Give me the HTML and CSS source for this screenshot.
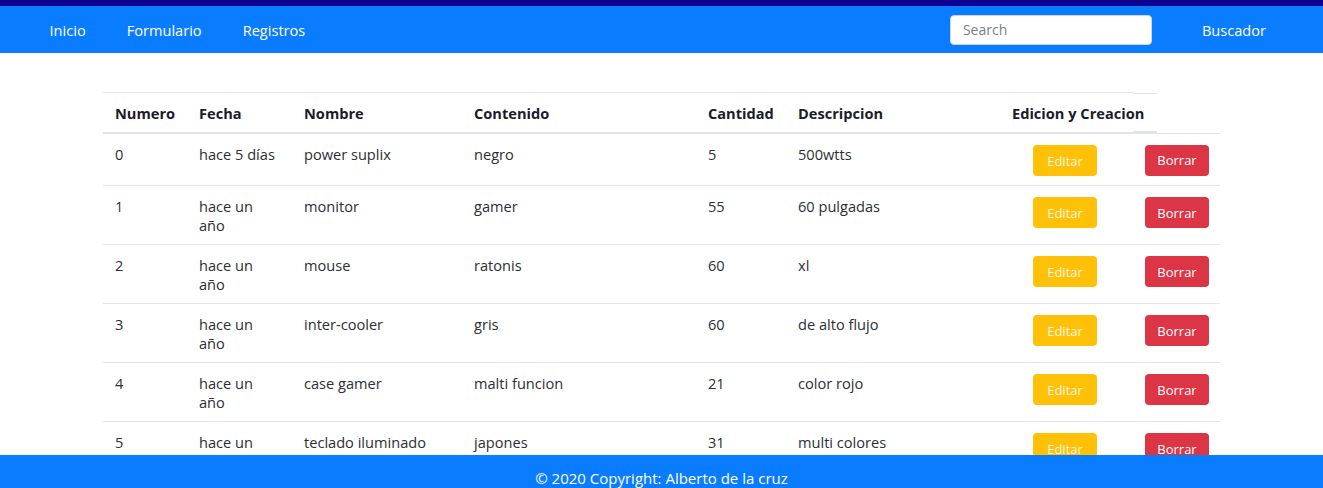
FILE: index.html
```html
<!DOCTYPE html>
<html lang="es">
<head>
<meta charset="utf-8">
<title>Registros</title>
<link rel="stylesheet" href="styles.css">
</head>
<body>
<div class="topstrip"></div>
<nav class="navbar">
  <ul class="nav-links">
    <li><a href="#">Inicio</a></li>
    <li><a href="#">Formulario</a></li>
    <li><a href="#">Registros</a></li>
  </ul>
  <form class="search-form">
    <input class="search-input" type="text" placeholder="Search">
    <button class="search-btn" type="button">Buscador</button>
  </form>
</nav>
<main class="content">
  <table class="table">
    <colgroup>
      <col class="c1"><col class="c2"><col class="c3"><col class="c4"><col class="c5"><col class="c6"><col class="c7"><col class="c8">
    </colgroup>
    <thead>
      <tr>
        <th>Numero</th><th>Fecha</th><th>Nombre</th><th>Contenido</th><th>Cantidad</th><th>Descripcion</th><th class="th-edit">Edicion y Creacion</th><th class="th-empty"></th>
      </tr>
    </thead>
    <tbody>
      <tr><td>0</td><td>hace 5 días</td><td>power suplix</td><td>negro</td><td>5</td><td>500wtts</td><td class="td-c"><button class="btn btn-warning">Editar</button></td><td><button class="btn btn-danger">Borrar</button></td></tr>
      <tr><td>1</td><td>hace un año</td><td>monitor</td><td>gamer</td><td>55</td><td>60 pulgadas</td><td class="td-c"><button class="btn btn-warning">Editar</button></td><td><button class="btn btn-danger">Borrar</button></td></tr>
      <tr><td>2</td><td>hace un año</td><td>mouse</td><td>ratonis</td><td>60</td><td>xl</td><td class="td-c"><button class="btn btn-warning">Editar</button></td><td><button class="btn btn-danger">Borrar</button></td></tr>
      <tr><td>3</td><td>hace un año</td><td>inter-cooler</td><td>gris</td><td>60</td><td>de alto flujo</td><td class="td-c"><button class="btn btn-warning">Editar</button></td><td><button class="btn btn-danger">Borrar</button></td></tr>
      <tr><td>4</td><td>hace un año</td><td>case gamer</td><td>malti funcion</td><td>21</td><td>color rojo</td><td class="td-c"><button class="btn btn-warning">Editar</button></td><td><button class="btn btn-danger">Borrar</button></td></tr>
      <tr><td>5</td><td>hace un año</td><td>teclado iluminado rgb</td><td>japones</td><td>31</td><td>multi colores</td><td class="td-c"><button class="btn btn-warning">Editar</button></td><td><button class="btn btn-danger">Borrar</button></td></tr>
    </tbody>
  </table>
</main>
<footer class="footer">© 2020 Copyright: Alberto de la cruz</footer>
</body>
</html>
```
FILE: styles.css
```css
* { box-sizing: border-box; }
html, body { margin: 0; padding: 0; }
body {
  font-family: "Open Sans", "Noto Sans", sans-serif;
  font-size: 14.6px;
  color: #2b2f33;
  background: #fff;
}
.topstrip { height: 6px; background: #0d0291; }
.navbar {
  height: 47px;
  background: #0a7cff;
  display: flex;
  align-items: center;
  padding: 0 57px 0 29px;
}
.nav-links {
  list-style: none;
  margin: 0;
  padding: 0;
  display: flex;
  flex: 1;
}
.nav-links a {
  display: block;
  padding: 0 20.5px;
  color: #fff;
  text-decoration: none;
  font-size: 14.6px;
}
.search-form { display: flex; align-items: center; }
.search-input {
  width: 202px;
  height: 30px;
  border: 1px solid #ced4da;
  border-radius: 4px;
  padding: 0 12px;
  font-family: inherit;
  font-size: 14px;
  color: #495057;
  background: #fff;
}
.search-input::placeholder { color: #7a7f85; }
.search-btn {
  margin-left: 50px;
  background: transparent;
  border: 0;
  padding: 0;
  color: #fff;
  font-family: inherit;
  font-size: 14.6px;
}
.content { padding-top: 39px; padding-bottom: 40px; }
.table {
  width: 1117px;
  margin: 0 auto;
  border-collapse: collapse;
  table-layout: fixed;
}
.c1 { width: 84px; } .c2 { width: 105px; } .c3 { width: 170px; } .c4 { width: 234px; }
.c5 { width: 90px; } .c6 { width: 211px; } .c7 { width: 136px; } .c8 { width: 87px; }
.table th, .table td {
  padding: 11px 12px 9px;
  line-height: 19px;
  text-align: left;
  vertical-align: top;
  border-top: 1px solid #e4e7ea;
}
.table th {
  font-weight: 700;
  color: #1b1b2a;
  border-bottom: 2px solid #e1e4e7;
  white-space: nowrap;
}
.table th.th-edit { padding-left: 15px; overflow: visible; }
.table th.th-empty {
  border-top: 0;
  border-bottom: 0;
  background:
    linear-gradient(#e4e7ea, #e4e7ea) left top / 24px 1px no-repeat,
    linear-gradient(#e1e4e7, #e1e4e7) left bottom / 24px 2px no-repeat;
}
.td-c { text-align: center !important; }
.btn {
  width: 64px;
  height: 31px;
  border: 0;
  border-radius: 4px;
  color: #fff;
  font-family: inherit;
  font-size: 13px;
  padding: 0;
  vertical-align: top;
}
.btn-warning { background: #ffc107; color: #fff7e0; }
.btn-danger { background: #dc3545; }
.footer {
  position: fixed;
  left: 0; right: 0; bottom: 0;
  height: 33px;
  background: #0a7cff;
  color: #fff;
  text-align: center;
  padding-top: 14px;
  line-height: 19px;
  font-size: 15px;
}
```
